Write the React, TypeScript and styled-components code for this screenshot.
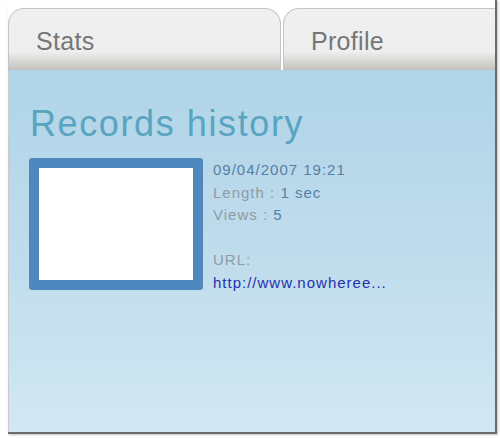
import styled, {createGlobalStyle} from "styled-components";

const GlobalStyle = createGlobalStyle`
  html, body {
    margin: 0;
    padding: 0;
    background: #ffffff;
  }
  body {
    font-family: "Liberation Sans", Arial, sans-serif;
  }
`

type Tab = { label: string; active?: boolean };

const tabs: Tab[] = [
    {label: "Stats", active: true},
    {label: "Profile"},
];

export default function App() {
    return (
        <>
            <GlobalStyle/>
            <Page>
                <Frame>
                    <TabBar>
                        {tabs.map((t, i) => (
                            <TabItem key={t.label} $first={i === 0}>
                                <TabLabel>{t.label}</TabLabel>
                            </TabItem>
                        ))}
                    </TabBar>
                    <Panel>
                        <Title>Records history</Title>
                        <RecordRow>
                            <Thumb/>
                            <Info>
                                <Line $tone="value">09/04/2007 19:21</Line>
                                <Line>Length : <Value>1 sec</Value></Line>
                                <Line>Views : <Value>5</Value></Line>
                                <Spacer/>
                                <Line>URL:</Line>
                                <Link href="#">http://www.nowheree...</Link>
                            </Info>
                        </RecordRow>
                    </Panel>
                </Frame>
            </Page>
        </>
    )
};

const Page = styled.div`
  width: 500px;
  height: 438px;
  padding-left: 8px;
  box-sizing: border-box;
  background: #ffffff;
`

const Frame = styled.div`
  display: flex;
  flex-direction: column;
  width: 489px;
  height: 434px;
  box-sizing: border-box;
  padding-top: 8px;
  border-right: 2px solid #6b6b6b;
  border-bottom: 2px solid #6b6b6b;
  box-shadow: 1px 1px 2px rgba(0, 0, 0, 0.25);
`

const TabBar = styled.div`
  display: flex;
  gap: 2px;
  height: 62px;
  flex-shrink: 0;
`

const TabItem = styled.div<{ $first?: boolean }>`
  box-sizing: border-box;
  flex: ${p => p.$first ? "0 0 273px" : "1"};
  padding: 20px 0 0 27px;
  border: 1px solid #c4c4c4;
  border-bottom: none;
  border-right: ${p => p.$first ? "1px solid #c4c4c4" : "none"};
  border-radius: ${p => p.$first ? "16px 16px 0 0" : "16px 0 0 0"};
  background: linear-gradient(to bottom, #f0f0f0 0%, #eeeeee 70%, #dad9d7 84%, #c4c2be 100%);
`

const TabLabel = styled.span`
  display: block;
  font-size: 25px;
  line-height: 25px;
  letter-spacing: 0.3px;
  color: #767676;
`

const Panel = styled.div`
  flex: 1;
  display: flex;
  flex-direction: column;
  padding: 36px 0 0 20px;
  border-left: 1px solid #c8ccd0;
  background: linear-gradient(to bottom, #b0d4e8 0%, #bfdcec 50%, #d2e7f3 100%);
`

const Title = styled.h1`
  margin: 0 0 0 1px;
  font-size: 36px;
  line-height: 36px;
  font-weight: normal;
  letter-spacing: 1.6px;
  color: #58a4c1;
`

const RecordRow = styled.div`
  display: flex;
  gap: 10px;
  margin-top: 16px;
`

const Thumb = styled.div`
  width: 174px;
  height: 132px;
  box-sizing: border-box;
  border: 10px solid #4f88be;
  border-radius: 3px;
  background: #ffffff;
`

const Info = styled.div`
  display: flex;
  flex-direction: column;
  margin-top: 1px;
  font-size: 15px;
  line-height: 22.5px;
  letter-spacing: 1px;
`

const Line = styled.div<{ $tone?: "value" }>`
  color: ${p => p.$tone === "value" ? "#557fa6" : "#8e9ba5"};
  white-space: nowrap;
`

const Value = styled.span`
  color: #557fa6;
`

const Spacer = styled.div`
  height: 22.5px;
`

const Link = styled.a`
  color: #2630ad;
  text-decoration: none;
  white-space: nowrap;
`
